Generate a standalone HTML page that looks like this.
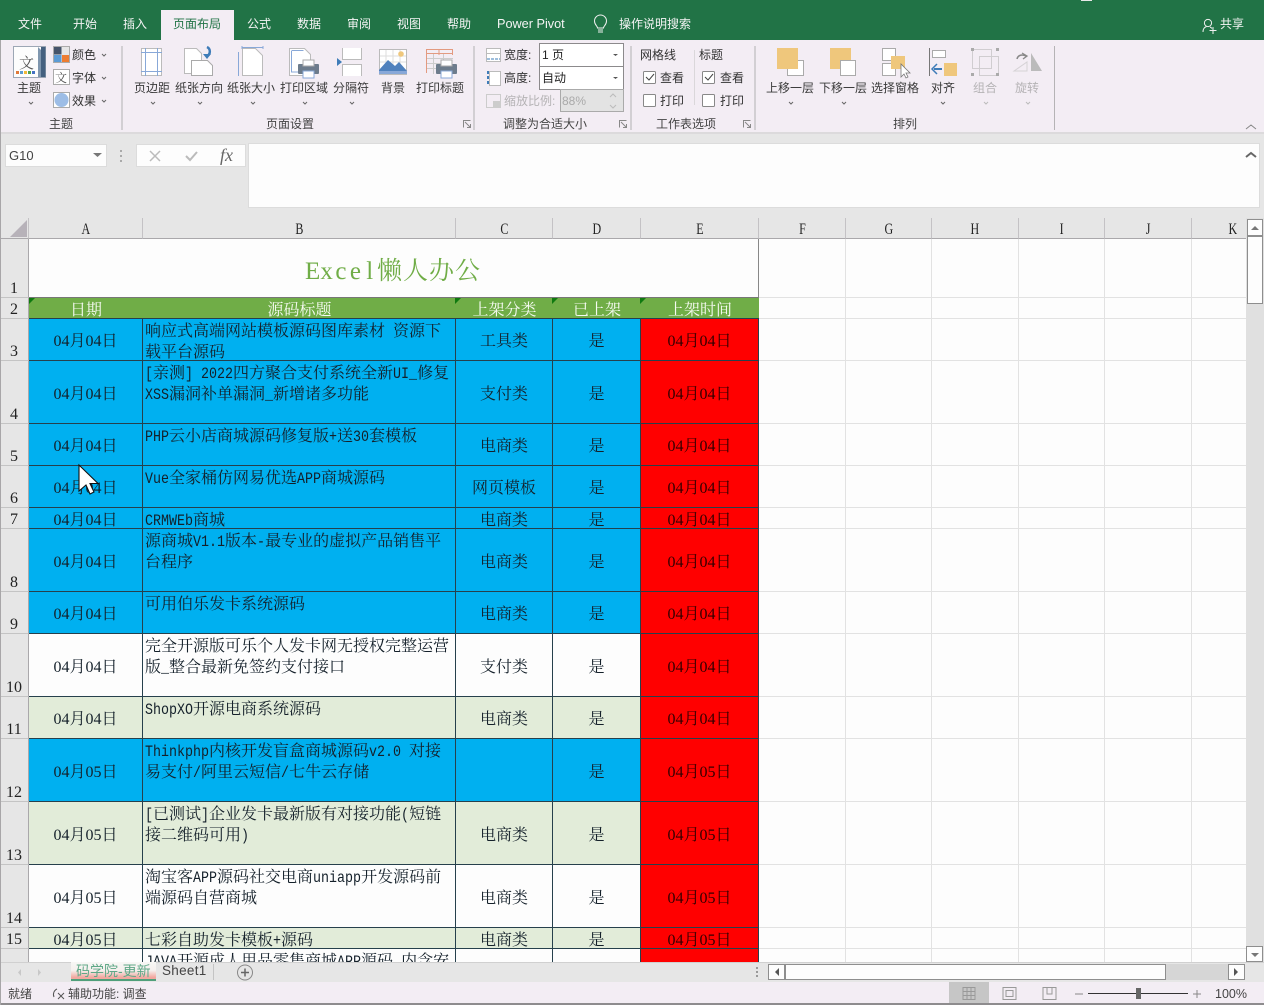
<!DOCTYPE html>
<html lang="zh"><head><meta charset="utf-8"><title>Excel</title>
<style>
html,body{margin:0;padding:0;width:1264px;height:1005px;overflow:hidden;background:#e6e6e6}
body{position:relative;font-family:"Liberation Sans","Noto Sans CJK SC",sans-serif;font-size:12px;color:#333}
div,span.t{position:absolute;box-sizing:border-box}
.t{white-space:nowrap;line-height:16px}
.tab{top:16px;color:#f4f4f4;font-size:12px;line-height:16px;white-space:nowrap;position:absolute}
.l{top:80px;width:60px;text-align:center;line-height:16px;white-space:nowrap;color:#3a3a3a}
.g{top:116px;width:120px;text-align:center;line-height:16px;white-space:nowrap;color:#444}
.s{position:absolute;top:46px;height:84px;width:2px;background:#d2cfd3}
.c{font-family:"Liberation Serif","Noto Serif CJK SC",serif;font-size:16px;line-height:21px;color:#14202a;white-space:nowrap;overflow:hidden;border-right:1px solid #26404c;border-bottom:1px solid #26404c;display:flex;align-items:center;justify-content:center;padding-top:4px}
.c i{font:normal 16px "Liberation Mono",monospace;display:inline-block;white-space:pre;transform:scaleX(.8333);transform-origin:0 0}
.n1{margin-right:-1.6px}.n2{margin-right:-3.2px}.n3{margin-right:-4.8px}.n4{margin-right:-6.4px}.n5{margin-right:-8px}.n6{margin-right:-9.6px}.n8{margin-right:-12.8px}
.A{left:29px;width:114px}.B{left:143px;width:313px;display:block;padding:2px 0 0 2px}
.C{left:456px;width:97px}.D{left:553px;width:88px}.E{left:641px;width:118px}
.bl{background:#00b0f0}.gr{background:#e2ecd9}.wh{background:#fdfdfd}.rd{background:#f00;color:#300}
.c.H{background:#70ad47;color:#f6faf2;border-right:0;text-align:center}
.rh{left:0;width:29px;background:#e6e6e6;border-right:1px solid #aaa8ab;border-bottom:1px solid #c4c4c4;font-family:"Liberation Serif",serif;font-size:16px;line-height:17px;color:#222;display:flex;align-items:flex-end;justify-content:center;overflow:hidden}
.ch{top:218px;height:21px;background:#e6e6e6;border-right:1px solid #c4c2c5;border-bottom:1px solid #aaa8ab;font-family:"Liberation Serif",serif;font-size:16px;line-height:23px;text-align:center;color:#222}
.ch span{display:inline-block;transform:scaleX(.75)}
.tl{display:inline-block;width:14.4px;text-align:center}
</style></head><body>
<!-- title bar -->
<div style="left:0;top:0;width:1264px;height:40px;background:#217346"></div>
<div style="left:161px;top:10px;width:73px;height:31px;background:#f3edf4"></div>
<div style="left:1081px;top:0;width:11px;height:1px;background:#e8e8e8"></div>
<span class="tab" style="left:18px">文件</span><span class="tab" style="left:73px">开始</span><span class="tab" style="left:123px">插入</span>
<span class="tab" style="left:173px;color:#217346">页面布局</span><span class="tab" style="left:247px">公式</span><span class="tab" style="left:297px">数据</span>
<span class="tab" style="left:347px">审阅</span><span class="tab" style="left:397px">视图</span><span class="tab" style="left:447px">帮助</span>
<span class="tab" style="left:497px;font-size:12.7px">Power Pivot</span><span class="tab" style="left:619px">操作说明搜索</span><span class="tab" style="left:1220px">共享</span>
<!-- ribbon -->
<div style="left:0;top:40px;width:1264px;height:92px;background:#f3edf4"></div>
<div style="left:0;top:132px;width:1264px;height:2px;background:#dcdadc"></div>
<div style="left:0;top:40px;width:1px;height:965px;background:#a8a6a8;z-index:9"></div>
<span class="s" style="left:121px"></span><span class="s" style="left:473px"></span><span class="s" style="left:630px"></span><span class="s" style="left:754px"></span><span class="s" style="left:1054px;background:#b5b3b5;width:1px"></span>
<div style="left:694px;top:50px;width:1px;height:55px;background:#dad7da"></div>
<div class="l" style="left:-1px">主题</div>
<div class="t" style="left:72px;top:47px">颜色</div><div class="t" style="left:72px;top:70px">字体</div><div class="t" style="left:72px;top:93px">效果</div>
<div class="l" style="left:122px">页边距</div><div class="l" style="left:169px">纸张方向</div><div class="l" style="left:221px">纸张大小</div><div class="l" style="left:274px">打印区域</div>
<div class="l" style="left:321px">分隔符</div><div class="l" style="left:363px">背景</div><div class="l" style="left:410px">打印标题</div>
<div class="t" style="left:504px;top:47px">宽度:</div><div class="t" style="left:504px;top:70px">高度:</div><div class="t" style="left:504px;top:93px;color:#b5b3b5">缩放比例:</div>
<div style="left:539px;top:43px;width:85px;height:24px;background:#fff;border:1px solid #8c8a8c"></div>
<div style="left:539px;top:66px;width:85px;height:24px;background:#fff;border:1px solid #8c8a8c"></div>
<div style="left:560px;top:89px;width:64px;height:23px;background:#e3e3e3;border:1px solid #aaa"></div>
<div class="t" style="left:542px;top:47px;color:#222">1 页</div><div class="t" style="left:542px;top:70px;color:#222">自动</div><div class="t" style="left:562px;top:93px;color:#aaa">88%</div>
<div class="t" style="left:640px;top:47px">网格线</div><div class="t" style="left:699px;top:47px">标题</div>
<div class="t" style="left:660px;top:70px">查看</div><div class="t" style="left:660px;top:93px">打印</div><div class="t" style="left:720px;top:70px">查看</div><div class="t" style="left:720px;top:93px">打印</div>
<div class="l" style="left:760px">上移一层</div><div class="l" style="left:813px">下移一层</div><div class="l" style="left:865px">选择窗格</div><div class="l" style="left:913px">对齐</div>
<div class="l" style="left:955px;color:#b5b3b5">组合</div><div class="l" style="left:997px;color:#b5b3b5">旋转</div>
<div class="g" style="left:1px">主题</div><div class="g" style="left:230px">页面设置</div><div class="g" style="left:485px">调整为合适大小</div><div class="g" style="left:626px">工作表选项</div><div class="g" style="left:845px">排列</div>
<!-- formula bar -->
<div style="left:5px;top:144px;width:102px;height:23px;background:#fdfdfd;border:1px solid #dcdcdc"></div>
<div class="t" style="left:9px;top:148px;font-size:13px;color:#444">G10</div>
<div style="left:136px;top:144px;width:110px;height:23px;background:#fdfdfd;border:1px solid #dcdcdc"></div>
<div style="left:248px;top:143px;width:1012px;height:65px;background:#fdfdfd;border:1px solid #dcdcdc"></div>
<div class="t" style="left:220px;top:146px;font:italic 18px 'Liberation Serif',serif;color:#666;line-height:18px">fx</div>
<!-- headers -->
<div style="left:0;top:218px;width:29px;height:21px;background:#e6e6e6;border-right:1px solid #c4c2c5;border-bottom:1px solid #aaa8ab"></div>
<div class="ch" style="left:29px;width:114px"><span>A</span></div><div class="ch" style="left:143px;width:313px"><span>B</span></div><div class="ch" style="left:456px;width:97px"><span>C</span></div><div class="ch" style="left:553px;width:88px"><span>D</span></div><div class="ch" style="left:641px;width:118px"><span>E</span></div>
<div class="ch" style="left:759px;width:87px"><span>F</span></div><div class="ch" style="left:846px;width:86px"><span>G</span></div><div class="ch" style="left:932px;width:87px"><span>H</span></div><div class="ch" style="left:1019px;width:86px"><span>I</span></div><div class="ch" style="left:1105px;width:87px"><span>J</span></div><div class="ch" style="left:1192px;width:55px;text-align:right;padding-right:8px;border-right:0"><span>K</span></div>
<!-- sheet bg -->
<div style="left:29px;top:239px;width:1217px;height:723px;background:#fdfdfd"></div>
<div class="rh" style="top:239px;height:59px">1</div><div class="rh" style="top:298px;height:21px">2</div><div class="rh" style="top:319px;height:42px">3</div><div class="rh" style="top:361px;height:63px">4</div><div class="rh" style="top:424px;height:42px">5</div><div class="rh" style="top:466px;height:42px">6</div><div class="rh" style="top:508px;height:21px">7</div><div class="rh" style="top:529px;height:63px">8</div><div class="rh" style="top:592px;height:42px">9</div><div class="rh" style="top:634px;height:63px">10</div><div class="rh" style="top:697px;height:42px">11</div><div class="rh" style="top:739px;height:63px">12</div><div class="rh" style="top:802px;height:63px">13</div><div class="rh" style="top:865px;height:63px">14</div><div class="rh" style="top:928px;height:21px">15</div><div class="rh" style="top:949px;height:13px;border-bottom:0"></div>
<!-- row 1 -->
<div style="left:29px;top:239px;width:730px;height:59px;background:#fdfdfd;border-right:1px solid #888;border-bottom:1px solid #777"></div>
<div class="t" style="left:305px;top:256px;font:25px/32px 'Liberation Serif','Noto Serif CJK SC',serif;color:#70ad47"><span class="tl">E</span><span class="tl">x</span><span class="tl">c</span><span class="tl">e</span><span class="tl">l</span><span style="letter-spacing:1px">懒人办公</span></div>
<!-- row 2 -->
<div class="c H A" style="top:298px;height:21px">日期</div><div class="c H" style="left:143px;width:313px;top:298px;height:21px">源码标题</div><div class="c H C" style="top:298px;height:21px">上架分类</div><div class="c H D" style="top:298px;height:21px">已上架</div><div class="c H E" style="top:298px;height:21px">上架时间</div>
<!-- rows -->
<div class="c A bl" style="top:319px;height:42px">04月04日</div><div class="c B bl" style="top:319px;height:42px">响应式高端网站模板源码图库素材<i class="n1"> </i>资源下<br>载平台源码</div><div class="c C bl" style="top:319px;height:42px">工具类</div><div class="c D bl" style="top:319px;height:42px">是</div><div class="c E rd" style="top:319px;height:42px">04月04日</div>
<div class="c A bl" style="top:361px;height:63px">04月04日</div><div class="c B bl" style="top:361px;height:63px"><i class="n1">[</i>亲测<i class="n6">] 2022</i>四方聚合支付系统全新<i class="n3">UI_</i>修复<br><i class="n3">XSS</i>漏洞补单漏洞<i class="n1">_</i>新增诸多功能</div><div class="c C bl" style="top:361px;height:63px">支付类</div><div class="c D bl" style="top:361px;height:63px">是</div><div class="c E rd" style="top:361px;height:63px">04月04日</div>
<div class="c A bl" style="top:424px;height:42px">04月04日</div><div class="c B bl" style="top:424px;height:42px"><i class="n3">PHP</i>云小店商城源码修复版<i class="n1">+</i>送<i class="n2">30</i>套模板</div><div class="c C bl" style="top:424px;height:42px">电商类</div><div class="c D bl" style="top:424px;height:42px">是</div><div class="c E rd" style="top:424px;height:42px">04月04日</div>
<div class="c A bl" style="top:466px;height:42px">04月04日</div><div class="c B bl" style="top:466px;height:42px"><i class="n3">Vue</i>全家桶仿网易优选<i class="n3">APP</i>商城源码</div><div class="c C bl" style="top:466px;height:42px">网页模板</div><div class="c D bl" style="top:466px;height:42px">是</div><div class="c E rd" style="top:466px;height:42px">04月04日</div>
<div class="c A bl" style="top:508px;height:21px">04月04日</div><div class="c B bl" style="top:508px;height:21px"><i class="n6">CRMWEb</i>商城</div><div class="c C bl" style="top:508px;height:21px">电商类</div><div class="c D bl" style="top:508px;height:21px">是</div><div class="c E rd" style="top:508px;height:21px">04月04日</div>
<div class="c A bl" style="top:529px;height:63px">04月04日</div><div class="c B bl" style="top:529px;height:63px">源商城<i class="n4">V1.1</i>版本<i class="n1">-</i>最专业的虚拟产品销售平<br>台程序</div><div class="c C bl" style="top:529px;height:63px">电商类</div><div class="c D bl" style="top:529px;height:63px">是</div><div class="c E rd" style="top:529px;height:63px">04月04日</div>
<div class="c A bl" style="top:592px;height:42px">04月04日</div><div class="c B bl" style="top:592px;height:42px">可用伯乐发卡系统源码</div><div class="c C bl" style="top:592px;height:42px">电商类</div><div class="c D bl" style="top:592px;height:42px">是</div><div class="c E rd" style="top:592px;height:42px">04月04日</div>
<div class="c A wh" style="top:634px;height:63px">04月04日</div><div class="c B wh" style="top:634px;height:63px">完全开源版可乐个人发卡网无授权完整运营<br>版<i class="n1">_</i>整合最新免签约支付接口</div><div class="c C wh" style="top:634px;height:63px">支付类</div><div class="c D wh" style="top:634px;height:63px">是</div><div class="c E rd" style="top:634px;height:63px">04月04日</div>
<div class="c A gr" style="top:697px;height:42px">04月04日</div><div class="c B gr" style="top:697px;height:42px"><i class="n6">ShopXO</i>开源电商系统源码</div><div class="c C gr" style="top:697px;height:42px">电商类</div><div class="c D gr" style="top:697px;height:42px">是</div><div class="c E rd" style="top:697px;height:42px">04月04日</div>
<div class="c A bl" style="top:739px;height:63px">04月05日</div><div class="c B bl" style="top:739px;height:63px"><i class="n8">Thinkphp</i>内核开发盲盒商城源码<i class="n5">v2.0 </i>对接<br>易支付<i class="n1">/</i>阿里云短信<i class="n1">/</i>七牛云存储</div><div class="c C bl" style="top:739px;height:63px"></div><div class="c D bl" style="top:739px;height:63px">是</div><div class="c E rd" style="top:739px;height:63px">04月05日</div>
<div class="c A gr" style="top:802px;height:63px">04月05日</div><div class="c B gr" style="top:802px;height:63px"><i class="n1">[</i>已测试<i class="n1">]</i>企业发卡最新版有对接功能<i class="n1">(</i>短链<br>接二维码可用<i class="n1">)</i></div><div class="c C gr" style="top:802px;height:63px">电商类</div><div class="c D gr" style="top:802px;height:63px">是</div><div class="c E rd" style="top:802px;height:63px">04月05日</div>
<div class="c A wh" style="top:865px;height:63px">04月05日</div><div class="c B wh" style="top:865px;height:63px">淘宝客<i class="n3">APP</i>源码社交电商<i class="n6">uniapp</i>开发源码前<br>端源码自营商城</div><div class="c C wh" style="top:865px;height:63px">电商类</div><div class="c D wh" style="top:865px;height:63px">是</div><div class="c E rd" style="top:865px;height:63px">04月05日</div>
<div class="c A gr" style="top:928px;height:21px">04月05日</div><div class="c B gr" style="top:928px;height:21px">七彩自助发卡模板<i class="n1">+</i>源码</div><div class="c C gr" style="top:928px;height:21px">电商类</div><div class="c D gr" style="top:928px;height:21px">是</div><div class="c E rd" style="top:928px;height:21px">04月05日</div>
<div class="c A wh" style="top:949px;height:13px;border-bottom:0"></div><div class="c B wh" style="top:949px;height:13px;border-bottom:0"><i class="n4">JAVA</i>开源成人用品零售商城<i class="n3">APP</i>源码<i class="n1"> </i>内含安</div><div class="c C wh" style="top:949px;height:13px;border-bottom:0"></div><div class="c D wh" style="top:949px;height:13px;border-bottom:0"></div><div class="c E rd" style="top:949px;height:13px;border-bottom:0"></div>
<!-- bottom bars -->
<div style="left:0;top:962px;width:1264px;height:20px;background:#e6e6e6;border-top:1px solid #d0d0d0"></div>
<div style="left:71px;top:962px;width:85px;height:19px;background:linear-gradient(#f7f7f5 0%,#f5f0ee 50%,#f2a8a0 90%);border-bottom:2px solid #4f9f7a"></div>
<div class="t" style="left:76px;top:963px;font-size:14px;line-height:17px;color:#5fa887">码学院-更新</div>
<div class="t" style="left:162px;top:962px;font-size:13.5px;line-height:17px;color:#444;letter-spacing:.3px">Sheet1</div>
<div style="left:213px;top:964px;width:1px;height:16px;background:#c4c4c4"></div>
<div style="left:769px;top:964px;width:476px;height:16px;background:#d6d6d6"></div>
<div style="left:768px;top:964px;width:17px;height:16px;background:#fdfdfd;border:1px solid #8e8e8e"></div>
<div style="left:785px;top:964px;width:381px;height:16px;background:#fdfdfd;border:1px solid #8e8e8e"></div>
<div style="left:1228px;top:964px;width:17px;height:16px;background:#fdfdfd;border:1px solid #8e8e8e"></div>
<div style="left:0;top:982px;width:1264px;height:23px;background:#f3edf4;border-bottom:2px solid #8e8c8e"></div>
<div style="left:949px;top:982px;width:40px;height:21px;background:#c6c6c6"></div>
<div class="t" style="left:8px;top:986px;color:#444">就绪</div>
<div class="t" style="left:68px;top:986px;color:#444">辅助功能: 调查</div>
<div class="t" style="left:1215px;top:986px;color:#444;font-size:12.5px">100%</div>
<!-- scrollbar -->
<div style="left:1246px;top:218px;width:18px;height:744px;background:#e0e0e0"></div>
<div style="left:1247px;top:219px;width:16px;height:17px;background:#fdfdfd;border:1px solid #8e8e8e"></div>
<div style="left:1247px;top:236px;width:16px;height:68px;background:#fdfdfd;border:1px solid #8e8e8e"></div>
<div style="left:1246px;top:946px;width:17px;height:16px;background:#fdfdfd;border:1px solid #8e8e8e"></div>
<!-- icons -->
<svg width="1264" height="1005" viewBox="0 0 1264 1005" style="position:absolute;left:0;top:0;z-index:8" fill="none">
<!-- grid lines -->
<g stroke="#e2e2e2"><path d="M845.5 239V962M931.5 239V962M1018.5 239V962M1104.5 239V962M1191.5 239V962"/>
<path d="M759 297.5H1246M759 318.5H1246M759 360.5H1246M759 423.5H1246M759 465.5H1246M759 507.5H1246M759 528.5H1246M759 591.5H1246M759 633.5H1246M759 696.5H1246M759 738.5H1246M759 801.5H1246M759 864.5H1246M759 927.5H1246M759 948.5H1246"/></g>
<!-- green triangles -->
<g fill="#0f7a0f"><path d="M29 298h6l-6 6zM455 298h6l-6 6zM552 298h6l-6 6zM640 298h6l-6 6z"/></g>
<!-- top right, bulb -->
<g stroke="#f0f0f0" stroke-width="1"><path d="M598 32h5M598 30h5M597.5 28c0-2-3-3-3-7a6 6 0 0 1 12 0c0 4-3 5-3 7z"/>
<circle cx="1208" cy="23" r="3.6"/><path d="M1203 32c0-4 2-5 3.500-5.500M1210 27c1 .4 1.500 .8 2 1.500M1213 27v7M1209.500 30.500h7"/></g>
<!-- theme -->
<rect x="13.500" y="46.500" width="32" height="31" fill="#fdfdfd" stroke="#9da7b5"/><path d="M41 47h4.500v30H41z" fill="#44607f"/><path d="M38 47l3 3v27h-3z" fill="#7f96ae"/>
<g fill="#e0793a"><rect x="16" y="71" width="3" height="3"/></g><rect x="20" y="71" width="3" height="3" fill="#5c9bd1"/><rect x="24" y="71" width="3" height="3" fill="#f0b93a"/><rect x="28" y="71" width="3" height="3" fill="#4fa04f"/><rect x="32" y="71" width="3" height="3" fill="#4472c4"/>
<text x="19" y="68" font-family="Noto Serif CJK SC,serif" font-size="15" fill="#555">文</text>
<!-- colour -->
<rect x="53.500" y="46.500" width="16" height="16" fill="#e6e6e6" stroke="#aaa"/><rect x="54" y="47" width="7.500" height="7.500" fill="#44546a"/><rect x="54" y="55" width="7.500" height="7" fill="#5b9bd5"/><rect x="62" y="55" width="7" height="7" fill="#ed7d31"/>
<rect x="53.500" y="69.500" width="16" height="15" fill="#fff" stroke="#aaa"/><text x="55" y="82" font-family="Noto Serif CJK SC,serif" font-size="12" fill="#555">文</text>
<rect x="53.500" y="92.500" width="16" height="15" fill="#fff" stroke="#aaa"/><circle cx="61.500" cy="100" r="7" fill="#9dbde6"/>
<!-- chevrons -->
<g stroke="#666" stroke-width="1"><path d="M102 54l2 2 2-2M102 77l2 2 2-2M102 100l2 2 2-2M29 102l2 2 2-2M151 102l2 2 2-2M198 102l2 2 2-2M251 102l2 2 2-2M303 102l2 2 2-2M350 102l2 2 2-2M789 102l2 2 2-2M842 102l2 2 2-2M941 102l2 2 2-2"/></g>
<g stroke="#bbb"><path d="M984 102l2 2 2-2M1026 102l2 2 2-2"/></g>
<!-- launchers -->
<g stroke="#888"><path d="M463.500 127.500v-7h7M465 122l5 5M470.500 124v3.500h-3.500M619.500 127.500v-7h7M621 122l5 5M626.500 124v3.500H623M743.500 127.500v-7h7M745 122l5 5M750.500 124v3.500H747M1246 129l5-4 5 4"/></g>
<!-- margins -->
<rect x="141.500" y="48.500" width="20" height="27" fill="#fff" stroke="#bbb"/><path d="M145.500 48v28M157.500 48v28M141 52.500h21M141 71.500h21" stroke="#88a8d8"/>
<!-- orientation -->
<path d="M184.500 48.500h12l5 5v20h-17z" fill="#fff" stroke="#bbb"/><path d="M191.500 60.500h16l5 5v10h-21z" fill="#fff" stroke="#aaa"/><path d="M207 47a5 5 0 0 1 0 9" stroke="#3e7cb8" stroke-width="2.500"/><path d="M203 54h8l-4 5z" fill="#3e7cb8"/>
<!-- size -->
<path d="M242.500 48.500h13l7 7v20h-20z" fill="#fff" stroke="#bbb"/><path d="M242 47.500h21M242 46v3M263 46v3M238.500 52v24" stroke="#88a8d8"/>
<!-- print area -->
<path d="M289.500 48.500h15l6 6v21h-21z" fill="#fff" stroke="#bbb"/><path d="M291.500 51v21h7M291.500 50.500h12" stroke="#88a8d8"/><rect x="298" y="64" width="21" height="10" rx="1" fill="#6d7c8c"/><rect x="303" y="60" width="11" height="6" fill="#fff" stroke="#aaa"/><rect x="303" y="71" width="11" height="7" fill="#fff" stroke="#88a8d8"/>
<!-- breaks -->
<path d="M342.500 48v11.500h19V48M342.500 76V64.500h19V76" fill="#fff" stroke="#bbb"/><path d="M337 58l5 4-5 4z" fill="#3e7cb8"/>
<!-- background -->
<rect x="379.500" y="49.500" width="27" height="25" fill="#fff" stroke="#bbb"/><path d="M386 50v24M393 50v24M400 50v24M380 56h26M380 62h26" stroke="#ddd"/><circle cx="401" cy="54" r="2.800" fill="#efc77c"/><path d="M379 70l9-10 7 6 4-4 8 9v3h-28z" fill="#4f81bd"/><path d="M379 71h28v3h-28z" fill="#88a8d8"/>
<!-- print titles -->
<path d="M426.500 49.500h26M426.500 53.500h26M426.500 49v24M439 49v6M452.500 49v6" stroke="#e39a80"/><path d="M427 58.500h26M427 63.500h14M427 68.500h10M433.500 54v20M443.500 54v6" stroke="#ccc"/><rect x="436" y="64" width="21" height="10" rx="1" fill="#6d7c8c"/><rect x="441" y="60" width="11" height="6" fill="#fff" stroke="#aaa"/><rect x="441" y="71" width="11" height="7" fill="#fff" stroke="#88a8d8"/>
<!-- size ctrls -->
<rect x="486.500" y="48.500" width="14" height="13" fill="#fff" stroke="#bbb"/><path d="M486 53.500h15" stroke="#bbb"/><path d="M487 59h13" stroke="#3e7cb8" stroke-dasharray="3 1"/>
<rect x="489.500" y="71.500" width="11" height="14" fill="#fff" stroke="#bbb"/><path d="M488 71v14" stroke="#3e7cb8" stroke-width="2" stroke-dasharray="3 2"/>
<rect x="486.500" y="94.500" width="14" height="13" fill="#f3edf4" stroke="#ccc"/><rect x="493" y="101" width="7" height="6" fill="#ccc"/>
<path d="M613 54h5l-2.500 2zM613 77h5l-2.500 2z" fill="#555"/>
<g stroke="#bbb"><path d="M610 97l3-3 3 3M610 105l3 3 3-3"/></g>
<!-- checkboxes -->
<g fill="#fff" stroke="#888"><rect x="643.500" y="71.500" width="12" height="12" rx="1"/><rect x="643.500" y="94.500" width="12" height="12" rx="1"/><rect x="702.500" y="71.500" width="12" height="12" rx="1"/><rect x="702.500" y="94.500" width="12" height="12" rx="1"/></g>
<path d="M646 77l3 3 5-6M705 77l3 3 5-6" stroke="#444"/>
<!-- arrange -->
<rect x="787.500" y="60.500" width="16" height="15" fill="#fff" stroke="#aaa"/><rect x="777" y="48" width="21" height="21" fill="#efc77c"/>
<rect x="830" y="48" width="21" height="21" fill="#efc77c"/><rect x="840.500" y="60.500" width="15" height="15" fill="#fff" stroke="#aaa"/>
<rect x="882.500" y="48.500" width="13" height="12" fill="#fff" stroke="#aaa"/><rect x="882.500" y="63.500" width="13" height="12" fill="#fff" stroke="#aaa"/><rect x="891" y="56" width="14" height="13" fill="#efc77c"/><path d="M901 64v13l3-3 2 4 2-1-2-4h4z" fill="#fff" stroke="#777" stroke-width=".8"/>
<path d="M929.500 48v28" stroke="#777"/><rect x="932.500" y="50.500" width="13" height="7" fill="#fff" stroke="#aaa"/><rect x="944" y="63" width="13" height="13" fill="#efc77c"/><path d="M942 69h-8" stroke="#3e7cb8" stroke-width="2"/><path d="M937 64l-5 5 5 5" stroke="#3e7cb8" stroke-width="1.500"/>
<g stroke="#d0cdd0"><rect x="972.500" y="49.500" width="19" height="19"/><rect x="979.500" y="56.500" width="19" height="19"/></g><g fill="#aaa"><rect x="971" y="48" width="3" height="3"/><rect x="996" y="48" width="3" height="3"/><rect x="971" y="73" width="3" height="3"/><rect x="996" y="73" width="3" height="3"/></g>
<path d="M1031 53v18h11z" fill="#bbb"/><path d="M1014 71l13-9v9z" stroke="#d5d2d5"/><path d="M1017 59c1-4 5-5 9-3" stroke="#888" stroke-width="1.500"/><path d="M1022 53l5 3-4 3" stroke="#888" stroke-width="1.300"/>
<!-- formula bar -->
<path d="M93 153h9l-4.500 4z" fill="#777"/><g fill="#aaa"><rect x="120" y="150" width="2" height="2"/><rect x="120" y="155" width="2" height="2"/><rect x="120" y="160" width="2" height="2"/></g>
<path d="M150 151l10 10M160 151l-10 10" stroke="#bbb" stroke-width="1.500"/><path d="M186 156l4 4 7-8" stroke="#bbb" stroke-width="2"/>
<path d="M1246 157l5-4 5 4" stroke="#666" stroke-width="2"/>
<!-- corner + scroll arrows -->
<path d="M27 220v17H10z" fill="#b7b2b9"/>
<path d="M1251 230l4-4 4 4zM1251 953l4 4 4-4z" fill="#777"/>
<path d="M779 968v8l-4-4zM1234 968v8l4-4z" fill="#555"/>
<g fill="#999"><rect x="756" y="967" width="2" height="2"/><rect x="756" y="971" width="2" height="2"/><rect x="756" y="975" width="2" height="2"/></g>
<!-- tabs -->
<path d="M21 969v7l-3-3.500zM38 969v7l3-3.500z" fill="#c8c8c8"/>
<circle cx="245" cy="972.500" r="7.500" stroke="#888"/><path d="M241 972.500h8M245 968.500v8" stroke="#666" stroke-width="1.500"/>
<!-- status icons -->
<path d="M57 989a6 6 0 0 0-3 8M58 993l6 6M64 993l-6 6" stroke="#555"/>
<g stroke="#999"><rect x="963" y="987.500" width="12" height="12"/><path d="M967 987v12M971 987v12M963 991.500h12M963 995.500h12"/>
<rect x="1003" y="987.500" width="13" height="12"/><rect x="1006" y="990.500" width="7" height="6"/>
<rect x="1043" y="987.500" width="13" height="12"/><path d="M1047 987v7h5v-7"/></g>
<path d="M1075 994h8M1193 994h8M1197 990v8" stroke="#888"/><path d="M1088 993.500h100" stroke="#333"/><rect x="1136" y="988" width="5" height="11" fill="#666"/>
<!-- cursor -->
<path d="M79 465v26l7-6 4 9 4-2-4-8.500h8z" fill="#fff" stroke="#111" stroke-width="1.100"/>
</svg>
</body></html>
